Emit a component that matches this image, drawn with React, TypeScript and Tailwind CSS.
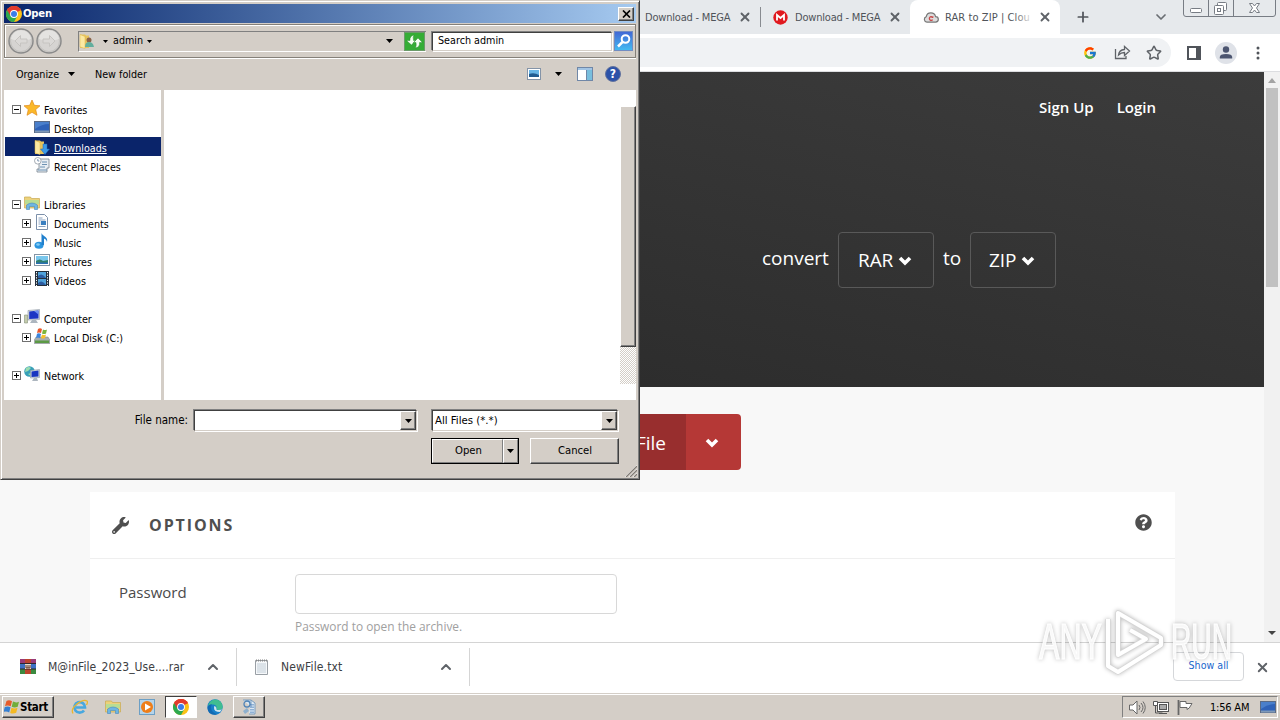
import type { ReactNode } from 'react'
import { ChevronDown, ChevronUp, Plus, Star, X } from 'lucide-react'
import { FcGoogle } from 'react-icons/fc'
import { FaQuestionCircle, FaWrench } from 'react-icons/fa'

const raised = 'bg-[#d4cec7] border border-t-white border-l-white border-r-[#404040] border-b-[#404040] shadow-[inset_-1px_-1px_0_#808080]'
const sunken = 'bg-white border border-t-[#404040] border-l-[#404040] border-r-[#d4cec7] border-b-[#d4cec7] shadow-[-1px_-1px_0_#808080,1px_1px_0_#ffffff]'

function Caret({ className = '', small }: { className?: string; small?: boolean }) {
  return (
    <svg className={`shrink-0 ${className}`} width={small ? 5 : 7} height={small ? 3 : 4} viewBox="0 0 7 4" preserveAspectRatio="none">
      <path d="M0 0h7L3.5 4z" fill="#000" />
    </svg>
  )
}

function ThickChevron() {
  return (
    <svg className="shrink-0" width="14" height="10" viewBox="0 0 14 10">
      <path d="M2 2l5 5 5-5" fill="none" stroke="#fff" strokeWidth="3.600" />
    </svg>
  )
}

function ChromeIcon({ size }: { size: number }) {
  return (
    <svg className="shrink-0" width={size} height={size} viewBox="0 0 16 16">
      <circle cx="8" cy="8" r="8" fill="#fbc116" />
      <path d="M8 8L1.07 4A8 8 0 0 1 14.93 4z" fill="#e33b2e" />
      <path d="M1.07 4A8 8 0 0 0 8 16L11.4 10 8 8z" fill="#2da94f" />
      <path d="M8 4.2h6.9A8 8 0 0 0 1.07 4L4.6 10z" fill="#e33b2e" />
      <circle cx="8" cy="8" r="3.9" fill="#fff" />
      <circle cx="8" cy="8" r="3" fill="#3b7de8" />
    </svg>
  )
}

function Folder({ children }: { children?: ReactNode }) {
  return (
    <svg className="shrink-0" width="16" height="16" viewBox="0 0 16 16">
      <path d="M1 1.5h5l1 1h3V15H1z" fill="#e8c35c" />
      <path d="M1 1.5l5 2V15.500L1 14z" fill="#fbe9a2" stroke="#dcb44b" strokeWidth=".5" />
      {children}
    </svg>
  )
}

const icons: Record<string, ReactNode> = {
  star: <path d="M8 0l2.300 5.300 5.700.5-4.300 3.800 1.300 5.700L8 12.300l-5 3 1.300-5.700L0 5.800l5.700-.5z" fill="#fbb829" stroke="#e08a1c" strokeWidth=".7" />,
  desktop: (
    <>
      <rect x=".5" y="2.500" width="15" height="11" fill="#2f62b8" stroke="#5a6a85" />
      <path d="M1 3h14v2Q8 5 1 10z" fill="#4a7fcb" />
      <path d="M1 11.500h14v2H1z" fill="#7f99b8" />
    </>
  ),
  recent: (
    <>
      <path d="M5 2h10v9h-2v4H3v-3h2z" fill="#e8eef3" stroke="#77848f" strokeWidth=".8" />
      <path d="M8 5h5M8 7.500h5M6 10h5M4 13h9" stroke="#5f87ac" strokeWidth=".9" />
      <circle cx="3.800" cy="3.800" r="3.300" fill="#fff" stroke="#9099a2" strokeWidth=".8" />
      <path d="M3.800 2v2h1.500" stroke="#476a92" strokeWidth=".7" fill="none" />
    </>
  ),
  libraries: (
    <>
      <path d="M.5 2h6l1 1.500h8V13H.5z" fill="#ecd27b" stroke="#c9a951" strokeWidth=".7" />
      <path d="M1 5h14v4H1z" fill="#b9dd94" />
      <path d="M2.500 14.500V10Q8 6 13.500 10v4.500h-3v-3h-5v3z" fill="#6db5e3" stroke="#4589bd" strokeWidth=".6" />
    </>
  ),
  documents: (
    <>
      <path d="M2.500.5h8l3 3v12h-11z" fill="#fff" stroke="#7c90aa" />
      <path d="M4.500 4h4M4.500 6h7M4.500 8h2M4.500 10h2M4.500 12.500h7" stroke="#8aa2c0" />
      <rect x="7" y="7" width="5" height="4" fill="#3a7fc0" />
    </>
  ),
  music: (
    <>
      <ellipse cx="5" cy="12.300" rx="4.500" ry="3.500" fill="#2b95df" />
      <path d="M7.500 12V0c1 3.500 7 3.500 5.500 9-.5-2.500-2-3-3-3.500V12z" fill="#2180cd" />
      <ellipse cx="4" cy="11.500" rx="1.800" ry="1.200" fill="#83cdf5" />
    </>
  ),
  pictures: (
    <>
      <rect x=".5" y="2.500" width="15" height="11" fill="#fff" stroke="#8495a5" />
      <path d="M2 4h12v8H2z" fill="#78c6ec" />
      <path d="M2 9q4-3 7 0l5-1v4H2z" fill="#2f7f6d" />
      <path d="M2 10.500h12V12H2z" fill="#2a6fb4" />
    </>
  ),
  videos: (
    <>
      <path d="M1 0h14v15H1z" fill="#25303c" />
      <path d="M4 1h8v6H4zM4 8h8v6H4z" fill="#4fa2da" />
      <path d="M4 5q4-4 8 2H4zM4 12q4-4 8 2H4z" fill="#2b5ba0" />
      <path d="M2.500 1v14M13.500 1v14" stroke="#fff" strokeDasharray="1.300 1.300" />
    </>
  ),
  computer: (
    <>
      <path d="M4 1.500l11.500-1v10L4 11z" fill="#d8dde3" stroke="#8b95a1" strokeWidth=".6" />
      <path d="M5.200 2.500l9.300-1v8l-9.300.5z" fill="#1d35c4" />
      <path d="M10 2l4.500-.5v4z" fill="#6e8ff0" />
      <path d="M8 11h4l2 3H6z" fill="#adb6bf" />
      <path d="M.5 6h3v8h-3z" fill="#c5ccac" stroke="#84907a" strokeWidth=".6" />
    </>
  ),
  disk: (
    <>
      <path d="M2 9h12l1.800 3v3.500H.3V12z" fill="#a7adb0" stroke="#777e82" strokeWidth=".5" />
      <path d="M1 12.500h14V15H1z" fill="#5c9a45" />
      <path d="M4 1q2-1.500 4 0L7 5Q5 4 3 5z" fill="#e8582c" />
      <path d="M9 1.500q2 1 4 0L12 5.500q-2 1-4 0z" fill="#7db53c" />
      <path d="M3 5.700q2-1 4 .3L6 10q-2-1-4 0z" fill="#3c85dd" />
      <path d="M8 6.500q2 1 4 0L11 10q-2 1-4 0z" fill="#f5c02d" />
    </>
  ),
  network: (
    <>
      <circle cx="5.500" cy="5.500" r="5.300" fill="#37a0b8" />
      <path d="M2 2q3-2 5 0L4 5 1 6zM4 8l3-1v3z" fill="#9bddb0" />
      <path d="M6.500 4.500l9-1v8l-9 .5z" fill="#d8dde3" stroke="#8b95a1" strokeWidth=".6" />
      <path d="M7.500 5.500l7-1v6l-7 .5z" fill="#1a35c0" />
      <path d="M10 12h3l1 3H8z" fill="#adb6bf" />
    </>
  ),
}

type TreeItem = { label: string; icon: string; level: number; box?: '+' | '-'; selected?: boolean }

const tree: (TreeItem | null)[] = [
  { label: 'Favorites', icon: 'star', level: 0, box: '-' },
  { label: 'Desktop', icon: 'desktop', level: 1 },
  { label: 'Downloads', icon: 'downloads', level: 1, selected: true },
  { label: 'Recent Places', icon: 'recent', level: 1 },
  null,
  { label: 'Libraries', icon: 'libraries', level: 0, box: '-' },
  { label: 'Documents', icon: 'documents', level: 1, box: '+' },
  { label: 'Music', icon: 'music', level: 1, box: '+' },
  { label: 'Pictures', icon: 'pictures', level: 1, box: '+' },
  { label: 'Videos', icon: 'videos', level: 1, box: '+' },
  null,
  { label: 'Computer', icon: 'computer', level: 0, box: '-' },
  { label: 'Local Disk (C:)', icon: 'disk', level: 1, box: '+' },
  null,
  { label: 'Network', icon: 'network', level: 0, box: '+' },
]

function TreeRow({ item }: { item: TreeItem | null }) {
  if (!item) return <div className="h-[19px]" />
  return (
    <div className={`h-[19px] flex items-center ${item.level ? 'pl-[17px]' : 'pl-[7px]'} ${item.selected ? 'bg-[#0a246a] text-white underline' : ''}`}>
      <svg className="shrink-0 mr-[3px] mt-px" width="9" height="9" shapeRendering="crispEdges">
        {item.box && <rect x=".5" y=".5" width="8" height="8" fill="#fff" stroke="#707070" />}
        {item.box && <path d={item.box === '+' ? 'M2 4.500h5M4.500 2v5' : 'M2 4.500h5'} stroke="#000" />}
      </svg>
      {item.icon === 'downloads' ? (
        <Folder>
          <path d="M9 5h4v5h2.500L11 15.500 6.500 10H9z" fill="#3d9ae8" stroke="#1f66b2" strokeWidth=".5" />
        </Folder>
      ) : (
        <svg className="shrink-0 -mt-px" width="16" height="16" viewBox="0 0 16 16">{icons[item.icon]}</svg>
      )}
      <span className="ml-1 pt-[4px] leading-4">{item.label}</span>
    </div>
  )
}

function NavArrow({ flip }: { flip?: boolean }) {
  return (
    <svg width="26" height="26" viewBox="0 0 26 26" className={flip ? 'scale-x-[-1]' : ''}>
      <circle cx="13" cy="13" r="12" fill="#d0cecb" stroke="#8b8b8b" strokeWidth="1.500" />
      <circle cx="13" cy="13" r="10.500" fill="#d6d4d2" stroke="#c4c2bf" />
      <path d="M3 11a10 9 0 0 1 20 0q-10 4-20 0z" fill="#e4e3e1" />
      <path d="M12.500 7.500L7 13l5.500 5.500v-3.500H19v-4h-6.500z" fill="#dbd9d7" stroke="#c6c4c1" />
    </svg>
  )
}

function OpenDialog() {
  return (
    <div className="absolute left-0 top-0 w-[640px] h-[480px] flex flex-col bg-[#d4cec7] border border-t-[#d4cec7] border-l-[#d4cec7] border-r-[#404040] border-b-[#404040] shadow-[inset_1px_1px_0_#fff,inset_-1px_-1px_0_#808080] px-[3px] text-[10.700px] text-black font-['DejaVu_Sans_Condensed','DejaVu_Sans',sans-serif]">
      <div className="mt-[3px] h-[19px] shrink-0 flex items-center pl-[2px] pr-[2px] bg-linear-to-r from-[#0a246a] to-[#a6caf0] text-white">
        <ChromeIcon size={16} />
        <span className="ml-[1px] pt-px font-bold text-[11.200px] tracking-[-0.2px]">Open</span>
        <div className={`ml-auto w-4 h-[14px] flex items-center justify-center ${raised}`}>
          <svg width="9" height="8" viewBox="0 0 9 8"><path d="M1 .5l7 7M8 .5l-7 7" stroke="#000" strokeWidth="1.700" /></svg>
        </div>
      </div>

      {/* Address band */}
      <div className="mt-[1px] h-[34px] shrink-0 flex items-center border border-[#858079] shadow-[inset_1px_1px_0_#fff,0_1px_0_#fff] pl-[3px]">
        <NavArrow />
        <div className="ml-[2px]"><NavArrow flip /></div>
        <div className="ml-[16px] w-[348px] h-[21px] flex items-center border-t border-l border-[#808080] border-b border-b-white">
          <Folder>
            <circle cx="10" cy="7" r="2.500" fill="#8a6248" />
            <path d="M6 14q0-5 4-5t5 5z" fill="#62ae9d" />
          </Folder>
          <Caret className="ml-2" small />
          <span className="ml-[5px] w-[29px]">admin</span>
          <Caret className="ml-[5px]" small />
          <Caret className="ml-auto mr-[11px]" />
          <div className="w-[21px] h-[19px] mr-[1px] shrink-0 border border-[#6b9b69] bg-[#35ad35] flex items-center justify-center">
            <svg width="17" height="15" viewBox="0 0 17 15"><path d="M8 1Q3.500 2 4 6.500H.5L5.500 11l4-4.500H7.500Q6.500 3 8 1zM9.500 14q4.500-1 4-5.500h3L12 4 7.500 8.500H10q.8 3-.5 5.500z" fill="#f5fff2" stroke="#16811b" strokeWidth=".4" /></svg>
          </div>
        </div>
        <div className={`ml-[6px] w-[180px] h-[19px] flex items-center pt-px pl-[5px] ${sunken}`}>Search admin</div>
        <div className="ml-[2px] w-[19px] h-5 shrink-0 border border-[#718cc2] bg-linear-to-b from-[#4268d5] to-[#43baf1] flex items-center justify-center">
          <svg width="16" height="16" viewBox="0 0 16 16" fill="none" stroke="#fff" strokeWidth="2"><circle cx="9.500" cy="6" r="3.800" /><path d="M6.500 9L2 13.500" strokeWidth="2.500" /></svg>
        </div>
      </div>

      <div className="h-[32px] shrink-0 flex items-center pl-3 pr-[15px]">
        <span className="w-[44px] pt-[2px]">Organize</span>
        <Caret className="ml-[8px]" />
        <span className="ml-5 pt-[2px]">New folder</span>
        <svg className="ml-auto" width="14" height="12" viewBox="0 0 14 12"><rect x=".5" y=".5" width="13" height="11" fill="#fff" stroke="#8494a8" /><path d="M2 2h10v7H2z" fill="#66b4e5" /><path d="M2 6q5-2 10 1v2H2z" fill="#225c91" /></svg>
        <Caret className="ml-[14px]" />
        <svg className="ml-[15px]" width="16" height="14" viewBox="0 0 16 14"><rect x=".5" y=".5" width="15" height="13" fill="#fff" stroke="#7087a7" /><path d="M1 1h14v2H1z" fill="#a2c4e4" /><path d="M10 3h5v10h-5z" fill="#78bedd" /><path d="M9.500 3v10" stroke="#7087a7" /></svg>
        <div className="ml-[12px] w-4 h-4 rounded-full border border-[#63739e] bg-[#2c52a8] text-white text-[12px] leading-none font-bold flex items-center justify-center">?</div>
      </div>

      <div className="h-[310px] shrink-0 flex">
        <div className="w-[157px] bg-white pt-[9px] pl-[1px] whitespace-nowrap">
          {tree.map((item, i) => <TreeRow key={i} item={item} />)}
        </div>
        <div className="w-[3px]" />
        <div className="flex-1 bg-white pt-4 flex flex-col items-end">
          <div className={`w-4 h-[241px] ${raised}`} />
          <div className="w-4 h-[37px] bg-[repeating-conic-gradient(#fff_0_25%,#d4cec7_0_50%)] bg-size-[2px_2px]" />
        </div>
      </div>

      {/* File name and filter */}
      <div className="mt-[10px] flex items-center text-[11.500px]">
        <span className="w-[184px] pt-px text-right">File name:</span>
        <div className={`ml-[6px] w-[223px] h-[21px] flex justify-end ${sunken}`}>
          <div className={`w-4 h-[19px] flex items-center justify-center ${raised}`}><Caret /></div>
        </div>
        <div className={`ml-[15px] w-[186px] h-[21px] flex items-center justify-between pl-[2px] text-[11.300px] ${sunken}`}>
          <span className="pt-px">All Files (*.*)</span>
          <div className={`w-4 h-[19px] flex items-center justify-center ${raised}`}><Caret /></div>
        </div>
      </div>
      <div className="mt-[7px] flex pl-[427px] text-[11.200px]">
        <div className="w-[88px] h-[26px] border border-black flex">
          <div className="flex-1 flex items-center justify-center pt-px pl-[2px] border-t border-l border-white border-b border-b-[#808080] border-r border-r-[#808080]">Open</div>
          <div className="w-[15px] flex items-center justify-center border border-white border-r-[#808080] border-b-[#808080]"><Caret /></div>
        </div>
        <div className={`ml-[11px] w-[89px] h-[26px] flex items-center justify-center pt-px pl-px ${raised}`}>Cancel</div>
      </div>
      <svg className="absolute right-[2px] bottom-[2px]" width="12" height="12"><path d="M0 12L12 0M4 12l8-8M8 12l4-4" stroke="#fff" strokeWidth="1" /><path d="M1 12L12 1M5 12l7-7M9 12l3-3" stroke="#807b75" strokeWidth="1.300" /></svg>
    </div>
  )
}

function MegaIcon() {
  return (
    <svg className="shrink-0" width="15" height="15" viewBox="0 0 15 15">
      <circle cx="7.500" cy="7.500" r="7.200" fill="#e0191f" />
      <path d="M4 10.500V5l3.500 3L11 5v5.500" fill="none" stroke="#fff" strokeWidth="1.800" />
    </svg>
  )
}

function CloudIcon() {
  return (
    <svg className="shrink-0" width="16" height="11" viewBox="0 0 17 12">
      <path d="M4 11a3 3 0 0 1-.8-5.800A5.300 5.300 0 0 1 13.500 5a3 3 0 0 1 0 6z" fill="#ddd" stroke="#777" strokeWidth="1.300" />
      <path d="M10 5.500A2 2 0 1 0 10.300 8.300" fill="none" stroke="#c94a4a" strokeWidth="1.400" />
      <path d="M11 4v2.500H8.500z" fill="#c94a4a" />
    </svg>
  )
}

function Tab({ icon, label, active }: { icon: ReactNode; label: string; active?: boolean }) {
  return (
    <div className={`relative w-[150px] h-[34px] shrink-0 flex items-center pl-3 ${active ? 'bg-white rounded-t-lg' : ''}`}>
      <div className="w-[17px] flex justify-center">{icon}</div>
      <span className={`ml-[6px] w-[88px] pt-[2px] whitespace-nowrap text-[11px] text-[#50545a] ${active ? 'tracking-[0.08px]' : 'tracking-[-0.2px]'}`}>{label}</span>
      <X className="ml-[5px] shrink-0" size={14} strokeWidth={3.2} color="#5f6368" />
      {active && <div className="absolute left-[104px] top-2 w-5 h-5 bg-linear-to-r from-transparent to-white" />}
    </div>
  )
}

function BrowserTop() {
  return (
    <>
      <div className="h-[34px] shrink-0 bg-[#e6e9ec] flex pl-[610px] font-['DejaVu_Sans_Condensed','DejaVu_Sans',sans-serif]">
        <Tab icon={<MegaIcon />} label="Download - MEGA" />
        <div className="w-px h-5 mt-[7px] -mr-px bg-[#888b90]" />
        <Tab icon={<MegaIcon />} label="Download - MEGA" />
        <Tab icon={<CloudIcon />} label="RAR to ZIP | Clou" active />
        <Plus className="ml-[15px] mt-[9px]" size={16} strokeWidth={2.600} color="#50545a" />
        <ChevronDown className="ml-[62px] mt-[9px]" size={16} strokeWidth={2.600} color="#6a6e73" />
        <svg className="ml-[14px]" width="94" height="17" viewBox="0 0 94 17" fill="none" stroke="#777c84">
          <path d="M.5 0v14q0 2.500 2.500 2.500h87q2.500 0 2.500-2.500V0M25.500 0v16M50.500 0v16" />
          <rect x="7.500" y="8.500" width="11" height="4" rx="1" fill="#fff" />
          <rect x="34.500" y="2.500" width="9" height="8" rx="1" fill="#fff" />
          <rect x="31.500" y="5.500" width="9" height="9" rx="1" fill="#fff" />
          <rect x="34.500" y="8.500" width="3" height="3" />
          <path d="M66.500 3.500h3l2 2.500 2-2.500h3l-3 4.500 3 4.500h-3l-2-2.500-2 2.500h-3l3-4.500z" fill="#fff" />
        </svg>
      </div>
      <div className="h-[38px] shrink-0 bg-white border-b border-[#dcdde0] flex items-center pr-[13px]">
        <div className="w-[1171px] h-[29px] rounded-full bg-[#f0f2f4] flex items-center justify-end pr-[9px]">
          <FcGoogle size={14} />
          <svg className="ml-[17px] mr-[15px]" width="17" height="15" viewBox="0 0 17 15" fill="none" stroke="#5f6368" strokeWidth="1.300">
            <path d="M1.500 4v9.500H12V11M4.500 10Q5 5 10.500 4.500V1.500L15.500 6l-5 4.500V7.500Q7 7.500 4.500 10z" />
          </svg>
          <Star size={16} strokeWidth={2.300} color="#5f6368" />
        </div>
        <div className="ml-4 w-[14px] h-[14px] border-2 border-r-[5px] border-[#50545a]" />
        <div className="ml-[14px] w-[22px] h-[22px] rounded-full bg-[#dfe2e8] flex items-center justify-center">
          <svg width="14" height="13" viewBox="0 0 14 13" fill="#4c5570"><circle cx="7" cy="3.500" r="3.200" /><path d="M.8 12.500V11q0-3 6.200-3t6.200 3v1.500z" /></svg>
        </div>
        <svg className="ml-auto mr-[7px]" width="4" height="14" fill="#50545a"><circle cx="2" cy="2" r="1.500" /><circle cx="2" cy="7" r="1.500" /><circle cx="2" cy="12" r="1.500" /></svg>
      </div>
    </>
  )
}

function FormatButton({ label, className }: { label: string; className: string }) {
  return (
    <div className={`h-14 rounded-[4px] border border-[#595959] flex items-center gap-[5px] pt-px text-[19px] tracking-[-0.1px] ${className}`}>
      <span>{label}</span>
      <ThickChevron />
    </div>
  )
}

function PageContent() {
  return (
    <div className="h-[570px] shrink-0 flex font-['Open_Sans',sans-serif]">
      <div className="w-[1264px] h-full overflow-hidden flex flex-col bg-[#f8f8f8]">
        <div className="h-[315px] shrink-0 bg-linear-to-tr from-[#282828] to-[#3c3c3c] text-white">
          <div className="h-[72px] flex items-center justify-end gap-[23px] pr-[108px] pb-[2px] text-[15px] font-semibold">
            <span>Sign Up</span>
            <span>Login</span>
          </div>
          <div className="mt-[88px] flex items-center pl-[762px] text-[19px]">
            <span className="w-[76px] -mt-1">convert</span>
            <FormatButton label="RAR" className="w-[96px] pl-[19px]" />
            <span className="w-9 -mt-1 text-center">to</span>
            <FormatButton label="ZIP" className="w-[86px] pl-[18px]" />
          </div>
        </div>
        <div className="mt-[27px] ml-[523px] w-[218px] h-14 shrink-0 rounded-[4px] overflow-hidden flex text-white text-[19px]">
          <div className="w-[163px] bg-[#982e2e] flex items-center justify-end pt-[2px] pr-5">File</div>
          <div className="flex-1 bg-[#b53836] flex items-center justify-center pt-px pr-[3px]"><ThickChevron /></div>
        </div>
        <div className="mt-[22px] ml-[90px] w-[1085px] flex-1 bg-white">
          <div className="h-[67px] border-b border-[#efefef] flex items-center pl-[22px] pr-[23px] text-[#4f4f4f]">
            <FaWrench size={17} />
            <span className="ml-5 text-[16px] font-bold tracking-[1.9px]">OPTIONS</span>
            <FaQuestionCircle className="ml-auto -mt-[6px]" size={17} />
          </div>
          <div className="flex pl-[29px] pt-[15px]">
            <div className="w-[176px] pt-[7px] text-[15px] text-[#4a4a4a]">Password</div>
            <div>
              <div className="w-[322px] h-10 border border-[#d8d8d8] rounded-[4px]" />
              <div className="mt-[3px] text-[11.900px] leading-[18px] text-[#a0a0a0]">Password to open the archive.</div>
            </div>
          </div>
        </div>
      </div>
      <div className="w-4 bg-[#f1f1f1] flex flex-col items-center">
        <svg className="mt-[6px]" width="8" height="5"><path d="M0 5l4-5 4 5z" fill="#a3a3a3" /></svg>
        <div className="mt-[5px] w-3 h-[199px] bg-[#c1c1c1]" />
        <svg className="mt-auto mb-[7px]" width="8" height="4"><path d="M0 0h8L4 4z" fill="#444" /></svg>
      </div>
    </div>
  )
}

function DownloadBar() {
  return (
    <div className="h-[51px] shrink-0 bg-white border-t border-[#d4d4d4] flex items-center text-[12px] text-[#3c4043] font-['DejaVu_Sans_Condensed','DejaVu_Sans',sans-serif]">
      <div className="w-[237px] h-[38px] border-r border-[#d5d5d5] flex items-center pl-5 pr-[15px] -mt-[3px]">
        <svg width="16" height="15" viewBox="0 0 16 15">
          <path d="M0 0h16v5H0z" fill="#993a78" /><path d="M0 5h16v5H0z" fill="#3d70c4" /><path d="M0 10h16v5H0z" fill="#3c8a3f" />
          <path d="M5 0h6v15H5z" fill="#bd442d" /><path d="M0 4.500h16M0 10h16" stroke="#33262b" /><path d="M5 5h6v5H5z" fill="#e8dfd0" /><path d="M6 6v3h4V6M8 6v3" stroke="#5e3227" fill="none" />
        </svg>
        <span className="ml-3 pt-px tracking-[0.03px]">M@inFile_2023_Use....rar</span>
        <ChevronUp className="ml-auto" size={16} strokeWidth={3} color="#5f6368" />
      </div>
      <div className="w-[233px] h-[38px] border-r border-[#d5d5d5] flex items-center pl-[18px] pr-[15px] -mt-[3px]">
        <svg width="13" height="16" viewBox="0 0 13 16"><path d="M.5 1.500h12v14H.5z" fill="#f6f8fa" stroke="#999fa5" /><path d="M2 5h9M2 7h9M2 9h9M2 11h9M2 13h9" stroke="#b5c2ce" strokeWidth=".8" /><path d="M1 1.500h12" stroke="#888" strokeWidth="2" strokeDasharray="1 1" /></svg>
        <span className="ml-[13px] pt-px tracking-[0.15px]">NewFile.txt</span>
        <ChevronUp className="ml-auto" size={16} strokeWidth={3} color="#5f6368" />
      </div>
      <div className="ml-auto w-[71px] h-[29px] border border-[#d5d7da] rounded-[4px] flex items-center justify-center pb-px -mt-[3px] text-[10.600px] text-[#1a66cc]">Show all</div>
      <X className="ml-[11px] mr-[10px] -mt-[2px]" size={15} strokeWidth={3} color="#5f6368" />
    </div>
  )
}

function Flag() {
  return (
    <svg className="shrink-0" width="16" height="16" viewBox="0 0 16 16">
      <path d="M2.500 2Q5 .5 8 2.200L6.700 7.300Q4 5.800 1 7z" fill="#e65b2b" />
      <path d="M9 2.600q3 1.500 6 .2l-1.300 5q-3 1.500-6 0z" fill="#72ad3b" />
      <path d="M.8 8Q4 6.800 6.500 8.300L5.200 13.500Q2.500 12-.5 13z" fill="#347fd2" />
      <path d="M7.500 8.800q3 1.500 6 0l-1.300 5q-3 1.500-6 .2z" fill="#f4b922" />
    </svg>
  )
}

function Taskbar() {
  return (
    <div className="h-[27px] shrink-0 bg-[#d4cec7] border-t border-[#d4cec7] shadow-[inset_0_1px_0_#fff] flex items-center pl-[2px] pr-[2px] text-[11px] text-black font-['DejaVu_Sans_Condensed','DejaVu_Sans',sans-serif]">
      <div className={`w-[52px] h-[22px] flex items-center pl-px ${raised}`}>
        <Flag />
        <span className="pt-px font-bold text-[11.500px] tracking-[-0.3px]">Start</span>
      </div>
      <svg className="ml-[17px]" width="17" height="17" viewBox="0 0 17 17">
        <path d="M13 11.500A5.300 5.300 0 1 1 14 8.500H5" fill="none" stroke="#48a8df" strokeWidth="2.700" />
        <path d="M2 14.500Q-.5 10 6 5t10-3q1 1-.5 4" fill="none" stroke="#eab62f" strokeWidth="1.300" />
      </svg>
      <svg className="ml-[17px]" width="16" height="16" viewBox="0 0 16 16">{icons.libraries}</svg>
      <svg className="ml-[18px]" width="16" height="16" viewBox="0 0 16 16">
        <rect x=".5" y=".5" width="15" height="15" fill="#b5d4ea" stroke="#6c9fc5" />
        <circle cx="8" cy="8" r="6" fill="#ee7e1a" />
        <path d="M6 4.500l6 3.500-6 3.500z" fill="#fff" />
      </svg>
      <div className="ml-[10px] w-[32px] h-[22px] bg-white border border-t-[#404040] border-l-[#404040] border-r-white border-b-white flex items-center justify-center">
        <ChromeIcon size={16} />
      </div>
      <svg className="ml-[10px]" width="16" height="16" viewBox="0 0 16 16">
        <circle cx="8" cy="8" r="7.700" fill="#187fc9" />
        <path d="M.8 7Q3 0 9 .5T15.700 8q0 3-4.200 3-3-.2-2-2 .5-3-3-3.500Q3 5 .8 7z" fill="#40bd91" />
        <path d="M.5 9Q1 5.500 5 5.200 2.500 9 6 13l4 2.500Q1 17 .5 9z" fill="#126ab3" />
        <path d="M9.500 9q-1 2 2 2 2.500 0 3.500-.8L13 13Q7 13 7 9t2.500 0z" fill="#cfe5ee" />
      </svg>
      <div className={`ml-[10px] w-8 h-[22px] flex items-center justify-center ${raised}`}>
        <svg width="16" height="17" viewBox="0 0 16 17" fill="none">
          <path d="M2 1h8v7M10 1l4 3v11H8" fill="#dbe8f3" stroke="#7b9cbd" />
          <circle cx="6" cy="5" r="3" stroke="#4f83b7" strokeWidth="1.300" />
          <path d="M10 5v9M12 5v9" stroke="#4278b7" strokeDasharray="1.500 1" />
          <path d="M2 12l4-3 2 3-4 3z" fill="#8eb0ce" />
        </svg>
      </div>

      {/* Tray */}
      <div className="ml-auto w-[156px] h-[22px] border border-t-[#808080] border-l-[#808080] border-r-white border-b-white flex items-center pl-[6px]">
        <svg width="17" height="15" viewBox="0 0 17 15" fill="none" stroke="#676767"><path d="M.5 5H4l4-4v13l-4-4H.5z" fill="#fff" /><path d="M10 5q2 2.500 0 5M12 3q4 4.500 0 9M14 1.500q4.500 6 0 12" /></svg>
        <svg className="ml-[7px]" width="16" height="15" viewBox="0 0 16 15" fill="none" stroke="#555"><rect x="4.500" y="2.500" width="11" height="9" fill="#fff" /><rect x="6.500" y="4.500" width="7" height="5" fill="#aaa" /><path d="M.5 1.500h4v4h-4z" fill="#fff" /><path d="M2.500 6v7h7M6 13.500h8" /></svg>
        <svg className="ml-[8px]" width="17" height="15" viewBox="0 0 17 15" stroke="#676767"><path d="M1.500 0v15" strokeWidth="1.800" /><path d="M3 1.500h6v2h6q-3 6-5 6V7.500H3z" fill="#fff" /></svg>
        <span className="ml-[16px] pt-[2px] tracking-[-0.2px] whitespace-nowrap">1:56 AM</span>
        <svg className="ml-auto mr-[1px]" width="16" height="16" viewBox="0 0 16 16">{icons.desktop}</svg>
      </div>
    </div>
  )
}

function Watermark() {
  return (
    <svg className="absolute left-[1030px] top-[604px] drop-shadow-[0_0_2px_rgba(0,0,0,0.28)]" width="212" height="76" viewBox="0 0 212 76">
      <g fill="#fff" fillOpacity=".85" stroke="#fff" strokeWidth="1.200" fontFamily="'Liberation Sans', sans-serif" fontSize="50">
        <text x="9" y="55" textLength="63" lengthAdjust="spacingAndGlyphs">ANY</text>
        <text x="141" y="55" textLength="61" lengthAdjust="spacingAndGlyphs">RUN</text>
      </g>
      <path d="M78 15v47l10 6 43-27v-7L88 9v42l28-16-16-9" fill="none" stroke="#d6d6d6" strokeWidth="5.500" strokeLinejoin="round" />
      <path d="M78 15v47l10 6 43-27v-7L88 9v42l28-16-16-9" fill="none" stroke="#fff" strokeWidth="4" strokeLinejoin="round" />
    </svg>
  )
}

export default function App() {
  return (
    <div className="relative w-[1280px] h-[720px] overflow-hidden flex flex-col bg-white">
      <BrowserTop />
      <PageContent />
      <DownloadBar />
      <Taskbar />
      <Watermark />
      <OpenDialog />
    </div>
  )
}
